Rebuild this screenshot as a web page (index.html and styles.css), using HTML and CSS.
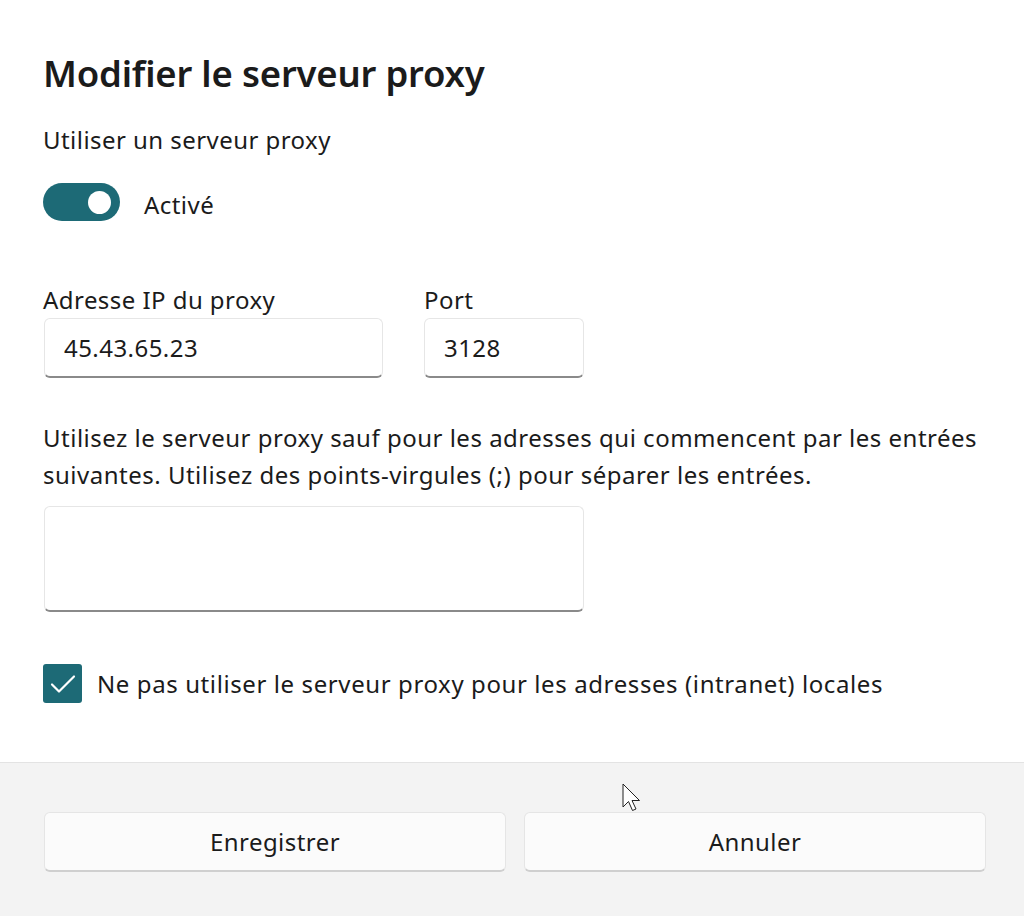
FILE: index.html
```html
<!DOCTYPE html>
<html lang="fr">
<head>
<meta charset="utf-8">
<title>Modifier le serveur proxy</title>
<link rel="stylesheet" href="styles.css">
</head>
<body>
<div class="dialog">
  <main class="content">
    <h1 class="title">Modifier le serveur proxy</h1>
    <p class="label first">Utiliser un serveur proxy</p>
    <div class="toggle-row">
      <span class="toggle"><span class="knob"></span></span>
      <span class="toggle-text">Activé</span>
    </div>
    <div class="fields">
      <div class="field ip">
        <label class="label">Adresse IP du proxy</label>
        <div class="input">45.43.65.23</div>
      </div>
      <div class="field port">
        <label class="label">Port</label>
        <div class="input">3128</div>
      </div>
    </div>
    <p class="para">Utilisez le serveur proxy sauf pour les adresses qui commencent par les entrées suivantes. Utilisez des points-virgules (;) pour séparer les entrées.</p>
    <div class="textarea"></div>
    <div class="check-row">
      <span class="checkbox">
        <svg width="26" height="20" viewBox="0 0 26 20"><path d="M2 10.5 L9 17.5 L24 2.5" fill="none" stroke="#fff" stroke-width="2.2" stroke-linecap="round" stroke-linejoin="round"/></svg>
      </span>
      <span class="check-text">Ne pas utiliser le serveur proxy pour les adresses (intranet) locales</span>
    </div>
  </main>
  <footer class="footer">
    <button class="btn">Enregistrer</button>
    <button class="btn">Annuler</button>
  </footer>
  <svg class="cursor" width="20" height="32" viewBox="0 0 20 32"><path d="M1 1 L1 24 L6.5 18.5 L10.5 27.5 L14 26 L10 17.5 L17.5 17.5 Z" fill="#fff" stroke="#222" stroke-width="1" stroke-linejoin="miter"/></svg>
</div>
</body>
</html>
```
FILE: styles.css
```css
* { box-sizing: border-box; }
html, body { margin: 0; padding: 0; }
body {
  background: #ffffff;
  font-family: "Noto Sans", "Open Sans", sans-serif;
  color: #1b1b1b;
  width: 1024px;
  height: 916px;
  overflow: hidden;
}
.dialog {
  position: relative;
  height: 916px;
  display: flex;
  flex-direction: column;
}
.content {
  flex: 1;
  padding: 49px 38px 0 43px;
}
.title {
  margin: 0;
  font-size: 36.5px;
  line-height: 48px;
  font-weight: 600;
  letter-spacing: -0.2px;
}
.label {
  display: block;
  margin: 0;
  font-size: 24px;
  line-height: 30px;
  letter-spacing: 0.45px;
}
.label.first { margin-top: 28px; }
.toggle-row {
  margin-top: 28px;
  display: flex;
  align-items: center;
  height: 38px;
}
.toggle {
  width: 77px;
  height: 38px;
  border-radius: 19px;
  background: #1d6a76;
  display: flex;
  align-items: center;
  justify-content: flex-end;
  padding-right: 9px;
}
.knob {
  width: 23px;
  height: 23px;
  border-radius: 50%;
  background: #ffffff;
}
.toggle-text {
  margin-left: 24px;
  padding-top: 4px;
  font-size: 24px;
  letter-spacing: 0.45px;
}
.fields {
  margin-top: 64px;
  display: flex;
  gap: 41px;
}
.field .label { margin-bottom: 3px; }
.field.ip .input { width: 339px; margin-left: 1px; }
.field.port .input { width: 160px; }
.input {
  height: 60px;
  background: #ffffff;
  border: 1px solid #e6e6e6;
  border-bottom: 2px solid #8a8a8a;
  border-radius: 6px;
  padding: 0 19px;
  display: flex;
  align-items: center;
  font-size: 24px;
  letter-spacing: 0.45px;
}
.para {
  margin: 41px 0 0;
  font-size: 24px;
  line-height: 37px;
  letter-spacing: 0.5px;
}
.textarea {
  margin: 13px 0 0 1px;
  width: 540px;
  height: 106px;
  background: #ffffff;
  border: 1px solid #e6e6e6;
  border-bottom: 2px solid #8a8a8a;
  border-radius: 6px;
}
.check-row {
  margin-top: 52px;
  display: flex;
  align-items: center;
}
.checkbox {
  width: 39px;
  height: 39px;
  border-radius: 3px;
  background: #1d6a76;
  display: flex;
  align-items: center;
  justify-content: center;
}
.check-text {
  margin-left: 15px;
  font-size: 24px;
  letter-spacing: 0.6px;
}
.footer {
  height: 154px;
  flex: none;
  background: #f3f3f3;
  border-top: 1px solid #e3e3e3;
  padding: 49px 38px 0 44px;
  display: flex;
  gap: 18px;
  align-items: flex-start;
}
.btn {
  flex: 1;
  height: 60px;
  background: #fbfbfb;
  border: 1px solid #e5e5e5;
  border-bottom: 2px solid #cfcfcf;
  border-radius: 6px;
  font-family: inherit;
  font-size: 24px;
  letter-spacing: 0.45px;
  color: #1b1b1b;
}
.cursor {
  position: absolute;
  left: 622px;
  top: 783px;
}
```
